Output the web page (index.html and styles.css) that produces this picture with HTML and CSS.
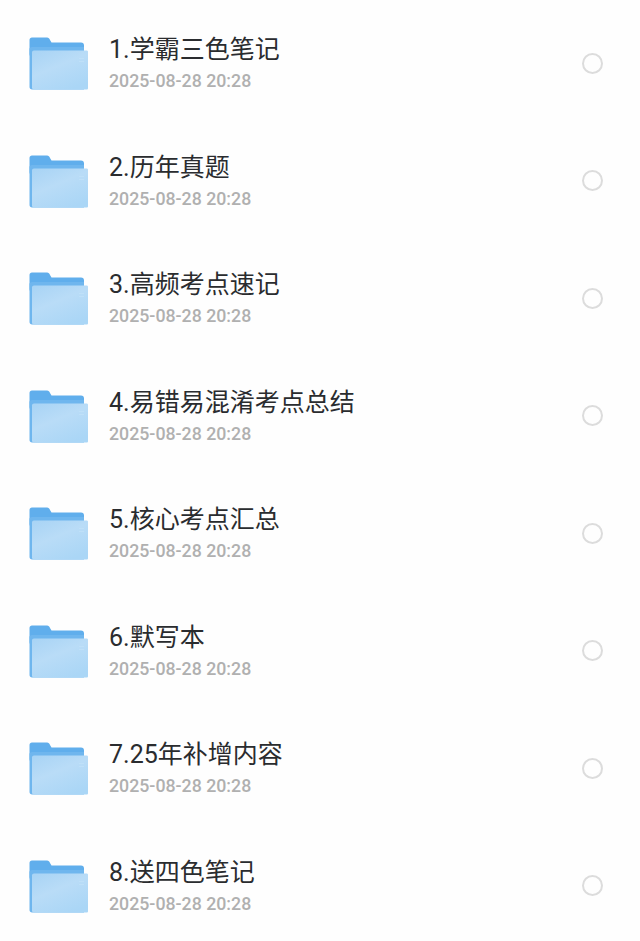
FILE: index.html
```html
<!DOCTYPE html>
<html lang="zh-CN">
<head>
  <meta charset="UTF-8" />
  <title>文件列表</title>
  <link rel="stylesheet" href="styles.css">
</head>
<body>

<svg class="defs" width="0" height="0" aria-hidden="true">
  <defs>
    <linearGradient id="frente" x1="0.1" y1="0" x2="0.7" y2="1">
      <stop offset="0" stop-color="#a9d4f5"/>
      <stop offset="0.45" stop-color="#b9dcf7"/>
      <stop offset="1" stop-color="#aad6f6"/>
    </linearGradient>
    <symbol id="carpeta" viewBox="0 0 60 54">
      <path d="M3 0.5H18C19.500 0.5 20.500 1.500 21 3L22.500 5.500H52C54 5.500 55 6.500 55 8.500V20H3C1.500 20 0.500 19 0.500 17V3C0.500 1.500 1.500 0.500 3 0.500Z" fill="#60aeec"/>
      <path d="M3 10H55V52.500H3C1.500 52.500 0.500 51.500 0.500 50V12C0.500 11 1.500 10 3 10Z" fill="#6fb6ee"/>
      <path d="M5 13.500H57.500C58.500 13.500 59 14 59 15V51C59 52 58.500 52.500 57.500 52.500H5C3.800 52.500 3 51.700 3 50.500V15.500C3 14.300 3.800 13.500 5 13.500Z" fill="url(#frente)"/>
      <path d="M50 21.500H55M50 24.500H55" stroke="#bfe0f8" stroke-width="1"/>
    </symbol>
  </defs>
</svg>

<ul class="lista">
  <li class="fila">
    <svg class="icono"><use href="#carpeta"/></svg>
    <div class="info">
      <div class="nombre">1.学霸三色笔记</div>
      <div class="fecha">2025-08-28 20:28</div>
    </div>
    <span class="radio"></span>
  </li>
  <li class="fila">
    <svg class="icono"><use href="#carpeta"/></svg>
    <div class="info">
      <div class="nombre">2.历年真题</div>
      <div class="fecha">2025-08-28 20:28</div>
    </div>
    <span class="radio"></span>
  </li>
  <li class="fila">
    <svg class="icono"><use href="#carpeta"/></svg>
    <div class="info">
      <div class="nombre">3.高频考点速记</div>
      <div class="fecha">2025-08-28 20:28</div>
    </div>
    <span class="radio"></span>
  </li>
  <li class="fila">
    <svg class="icono"><use href="#carpeta"/></svg>
    <div class="info">
      <div class="nombre">4.易错易混淆考点总结</div>
      <div class="fecha">2025-08-28 20:28</div>
    </div>
    <span class="radio"></span>
  </li>
  <li class="fila">
    <svg class="icono"><use href="#carpeta"/></svg>
    <div class="info">
      <div class="nombre">5.核心考点汇总</div>
      <div class="fecha">2025-08-28 20:28</div>
    </div>
    <span class="radio"></span>
  </li>
  <li class="fila">
    <svg class="icono"><use href="#carpeta"/></svg>
    <div class="info">
      <div class="nombre">6.默写本</div>
      <div class="fecha">2025-08-28 20:28</div>
    </div>
    <span class="radio"></span>
  </li>
  <li class="fila">
    <svg class="icono"><use href="#carpeta"/></svg>
    <div class="info">
      <div class="nombre">7.25年补增内容</div>
      <div class="fecha">2025-08-28 20:28</div>
    </div>
    <span class="radio"></span>
  </li>
  <li class="fila">
    <svg class="icono"><use href="#carpeta"/></svg>
    <div class="info">
      <div class="nombre">8.送四色笔记</div>
      <div class="fecha">2025-08-28 20:28</div>
    </div>
    <span class="radio"></span>
  </li>
</ul>

</body>
</html>
```

FILE: styles.css
```css
body {
  font-family: Roboto, "Noto Sans CJK SC", sans-serif;
  background-color: #fefefe;
  margin: 0;
  padding: 0;
  overflow: hidden;
}

.defs {
  display: block;
  height: 0;
}

.lista {
  list-style: none;
  margin: 0;
  padding: 4px 0 0;
}

.fila {
  display: flex;
  align-items: center;
  height: 117.5px;
  padding: 0 37px 0 29px;
  box-sizing: border-box;
}

.icono {
  width: 60px;
  height: 54px;
  flex: none;
  margin-top: 3px;
}

.info {
  flex: 1;
  margin-left: 20px;
}

.nombre {
  font-size: 25px;
  line-height: 30px;
  margin-top: 1px;
  color: #2a2c2f;
}

.fecha {
  font-size: 17.75px;
  line-height: 20px;
  margin-top: 6px;
  font-weight: 500;
  color: #b0b0b0;
}

.radio {
  width: 17px;
  height: 17px;
  flex: none;
  margin-top: 1px;
  border: 2px solid #dcdcdc;
  border-radius: 50%;
}
```
